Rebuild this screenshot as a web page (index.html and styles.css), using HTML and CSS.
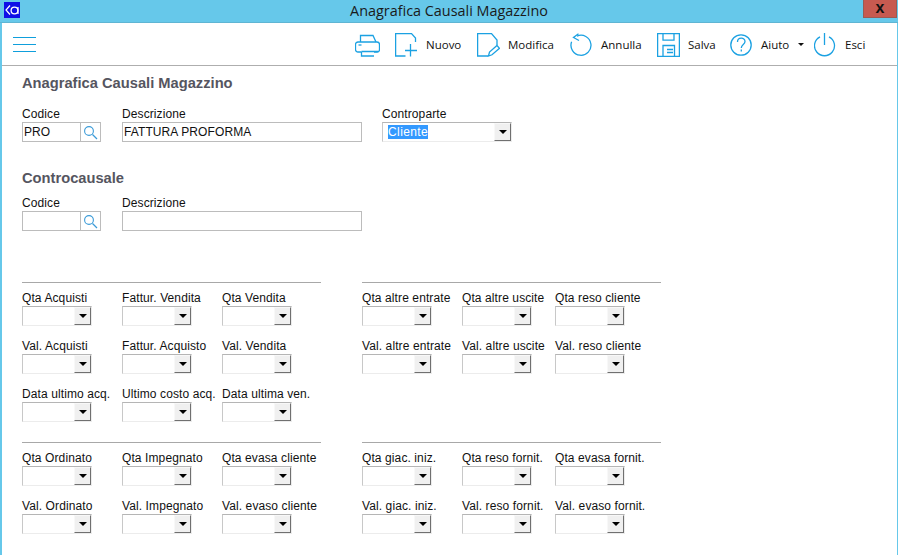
FILE: index.html
```html
<!DOCTYPE html>
<html lang="it">
<head>
<meta charset="utf-8">
<title>Anagrafica Causali Magazzino</title>
<link rel="stylesheet" href="styles.css">
</head>
<body>
<header class="titlebar">
  <span class="app-logo"><svg width="16" height="16" viewBox="0 0 16 16"><path d="M6 3.5 2 8l4 4.5" fill="none" stroke="#fff" stroke-width="1.2"/><circle cx="10.5" cy="8.5" r="3.4" fill="none" stroke="#fff" stroke-width="1.3"/><path d="M14 5v7" stroke="#fff" stroke-width="1.2"/></svg></span>
  <span class="window-title">Anagrafica Causali Magazzino</span>
  <span class="close-btn">x</span>
</header>
<div class="window">
<nav class="toolbar">
  <span class="hamburger"><i></i><i></i><i></i></span>
  <div class="actions">
    <span class="tool tool-print"><svg width="25" height="24" viewBox="0 0 25 24"><g class="ic"><path d="M5.500 9V2.500H18L21 9"/><path d="M6 19H3a2.500 2.500 0 0 1-2.500-2.500v-5A2.500 2.500 0 0 1 3 9h19a2.500 2.500 0 0 1 2.500 2.500v5A2.500 2.500 0 0 1 22 19h-3"/><path d="M6.500 18.500H23M6.500 18.500V23H19"/><path d="M3.500 12h3"/></g></svg></span>
    <span class="tool tool-new"><svg width="22" height="24" viewBox="0 0 22 24"><g class="ic"><path d="M10.500 23H.6V.6H16.500L20.500 5V9"/><path d="M10 17.500H22M15.500 11V23.500"/></g></svg><span class="tool-label">Nuovo</span></span>
    <span class="tool tool-edit"><svg width="23" height="24" viewBox="0 0 23 24"><g class="ic"><path d="M11 23H.6V.6H14.500L20 7V12"/><path d="M11.500 23l1-4 7.500-6.500 2.500 2.800-7.500 6.500z"/></g></svg><span class="tool-label">Modifica</span></span>
    <span class="tool tool-undo"><svg width="23" height="24" viewBox="0 0 23 24"><g class="ic"><path d="M7 3.100A10 10 0 1 1 1.600 8.800"/><path d="M8.500.8 3.500 4.500 9 7.500"/></g></svg><span class="tool-label">Annulla</span></span>
    <span class="tool tool-save"><svg width="23" height="24" viewBox="0 0 23 24"><g class="ic"><path d="M.6.600h21.800v22.800H.6z"/><path d="M6 .600v6.600h11V.6"/><path d="M6 23.400V12.500h11.500v10.900"/><path d="M10 16.500h6M10 19.500h6"/></g></svg><span class="tool-label">Salva</span></span>
    <span class="tool tool-help"><svg width="22" height="22" viewBox="0 0 22 22"><g class="ic"><circle cx="11" cy="11" r="10.200"/><path d="M7.500 8c0-5 7.500-5 7.500-.5 0 3-3.700 3-3.700 6.500"/><path d="M11.300 15.500v2"/></g></svg><span class="tool-label">Aiuto</span><span class="caret"></span></span>
    <span class="tool tool-exit"><svg width="22" height="24" viewBox="0 0 22 24"><g class="ic"><path d="M6 3.800a10 10 0 1 0 9 0"/><path d="M10.500 0v12"/></g></svg><span class="tool-label">Esci</span></span>
  </div>
</nav>
<main class="content">
  <h2 class="heading">Anagrafica Causali Magazzino</h2>
  <div class="form-row row-main">
    <div class="field w100"><label>Codice</label><div class="lookup"><span class="lookup-value">PRO</span><span class="lookup-btn"><svg width="15" height="15" viewBox="0 0 15 15"><circle cx="6" cy="6" r="4.400" fill="none" stroke="#3b9bd8" stroke-width="1.100"/><path d="M9.500 9.500l4.500 4.500" stroke="#3b9bd8" stroke-width="1.300"/></svg></span></div></div>
    <div class="field w260"><label>Descrizione</label><div class="text-input">FATTURA PROFORMA</div></div>
    <div class="field"><label>Controparte</label><div class="combo combo-wide"><span class="combo-value"><span class="selected">Cliente</span></span><span class="arrow"></span></div></div>
  </div>
  <h2 class="heading heading-2">Controcausale</h2>
  <div class="form-row row-sub">
    <div class="field w100"><label>Codice</label><div class="lookup"><span class="lookup-value"></span><span class="lookup-btn"><svg width="15" height="15" viewBox="0 0 15 15"><circle cx="6" cy="6" r="4.400" fill="none" stroke="#3b9bd8" stroke-width="1.100"/><path d="M9.500 9.500l4.500 4.500" stroke="#3b9bd8" stroke-width="1.300"/></svg></span></div></div>
    <div class="field w260"><label>Descrizione</label><div class="text-input"></div></div>
  </div>

  <section class="panels panels-1">
    <div class="panel">
      <div class="field"><label>Qta Acquisti</label><div class="combo"><span class="arrow"></span></div></div>
      <div class="field"><label>Fattur. Vendita</label><div class="combo"><span class="arrow"></span></div></div>
      <div class="field"><label>Qta Vendita</label><div class="combo"><span class="arrow"></span></div></div>
      <div class="field"><label>Val. Acquisti</label><div class="combo"><span class="arrow"></span></div></div>
      <div class="field"><label>Fattur. Acquisto</label><div class="combo"><span class="arrow"></span></div></div>
      <div class="field"><label>Val. Vendita</label><div class="combo"><span class="arrow"></span></div></div>
      <div class="field"><label>Data ultimo acq.</label><div class="combo"><span class="arrow"></span></div></div>
      <div class="field"><label>Ultimo costo acq.</label><div class="combo"><span class="arrow"></span></div></div>
      <div class="field"><label>Data ultima ven.</label><div class="combo"><span class="arrow"></span></div></div>
    </div>
    <div class="panel panel-right">
      <div class="field"><label>Qta altre entrate</label><div class="combo"><span class="arrow"></span></div></div>
      <div class="field"><label>Qta altre uscite</label><div class="combo"><span class="arrow"></span></div></div>
      <div class="field"><label>Qta reso cliente</label><div class="combo"><span class="arrow"></span></div></div>
      <div class="field"><label>Val. altre entrate</label><div class="combo"><span class="arrow"></span></div></div>
      <div class="field"><label>Val. altre uscite</label><div class="combo"><span class="arrow"></span></div></div>
      <div class="field"><label>Val. reso cliente</label><div class="combo"><span class="arrow"></span></div></div>
    </div>
  </section>

  <section class="panels panels-2">
    <div class="panel">
      <div class="field"><label>Qta Ordinato</label><div class="combo"><span class="arrow"></span></div></div>
      <div class="field"><label>Qta Impegnato</label><div class="combo"><span class="arrow"></span></div></div>
      <div class="field"><label>Qta evasa cliente</label><div class="combo"><span class="arrow"></span></div></div>
      <div class="field"><label>Val. Ordinato</label><div class="combo"><span class="arrow"></span></div></div>
      <div class="field"><label>Val. Impegnato</label><div class="combo"><span class="arrow"></span></div></div>
      <div class="field"><label>Val. evaso cliente</label><div class="combo"><span class="arrow"></span></div></div>
    </div>
    <div class="panel panel-right">
      <div class="field"><label>Qta giac. iniz.</label><div class="combo"><span class="arrow"></span></div></div>
      <div class="field"><label>Qta reso fornit.</label><div class="combo"><span class="arrow"></span></div></div>
      <div class="field"><label>Qta evasa fornit.</label><div class="combo"><span class="arrow"></span></div></div>
      <div class="field"><label>Val. giac. iniz.</label><div class="combo"><span class="arrow"></span></div></div>
      <div class="field"><label>Val. reso fornit.</label><div class="combo"><span class="arrow"></span></div></div>
      <div class="field"><label>Val. evaso fornit.</label><div class="combo"><span class="arrow"></span></div></div>
    </div>
  </section>
</main>
</div>
</body>
</html>
```

FILE: styles.css
```css
* { box-sizing: border-box; }
html, body { margin: 0; padding: 0; height: 100%; overflow: hidden; background: #fff; }
body {
  width: 898px; height: 555px;
  font-family: "Liberation Sans", Arial, sans-serif;
  font-size: 12px; color: #111; letter-spacing: .1px;
  display: flex; flex-direction: column;
}
.titlebar {
  height: 23px; flex: none;
  background: #66c8ea;
  border-bottom: 1px solid #5fb5d3;
  position: relative;
  display: flex; align-items: flex-start; justify-content: center;
  letter-spacing: 0;
}
.app-logo {
  position: absolute; left: 4px; top: 2px;
  width: 16px; height: 16px; background: #0f0fe6; display: block; line-height: 0;
}
.window-title {
  font-family: "Open Sans", "Noto Sans", sans-serif;
  font-size: 14.4px; line-height: 21px; color: #1a1a1a;
}
.close-btn {
  position: absolute; left: 863px; top: 0;
  width: 34px; height: 18px;
  background: #c75a50; border: 1px solid #9b5a53; border-top: 0;
  font: bold 16px/15px "Liberation Sans", sans-serif; text-align: center; color: #111;
}
.window {
  flex: 1; min-height: 0;
  border-left: 2px solid #66c8ea;
  border-right: 1px solid #66c8ea;
  display: flex; flex-direction: column;
}
.toolbar {
  height: 43px; flex: none;
  border-bottom: 1px solid #aeaeae;
  display: flex; align-items: center; justify-content: space-between;
  padding: 0 22px 0 11px;
  letter-spacing: 0;
}
.hamburger { display: flex; flex-direction: column; gap: 6px; width: 23px; }
.hamburger i { display: block; height: 1px; background: #0f9fdc; }
.actions { display: flex; align-items: center; }
.tool { display: flex; align-items: center; flex: none; }
.tool svg { display: block; flex: none; margin-top: 2px; }
.ic { fill: none; stroke: #1ba1e2; stroke-width: 1.3; }
.tool-label { font-family: "Open Sans", "Noto Sans", sans-serif; font-size: 11.5px; color: #111; }
.tool-print { width: 40px; }
.tool-new { width: 82px; }
.tool-new .tool-label { margin-left: 9px; }
.tool-edit { width: 93px; }
.tool-edit .tool-label { margin-left: 8px; }
.tool-undo { width: 87px; }
.tool-undo .tool-label { margin-left: 8px; }
.tool-save { width: 73px; }
.tool-save .tool-label { margin-left: 8px; }
.tool-help { width: 84px; }
.tool-help .tool-label { margin-left: 9px; }
.caret { width: 0; height: 0; margin-left: 9px; border: 3px solid transparent; border-top: 3px solid #111; border-bottom: 0; }
.tool-exit { width: 61px; }
.tool-exit .tool-label { margin-left: 9px; }
.content { padding: 0 0 0 20px; flex: 1; }
.heading {
  margin: 9px 0 0; font-size: 14.7px; line-height: 17px; font-weight: bold; color: #555560; letter-spacing: 0;
}
.heading-2 { margin-top: 28px; }
.form-row { display: flex; }
.row-main { margin-top: 15px; }
.row-sub { margin-top: 9px; }
label { display: block; line-height: 14px; height: 15px; white-space: nowrap; }
.w100 { width: 100px; }
.w260 { width: 260px; }
.lookup {
  width: 79px; height: 20px; border: 1px solid #bcbcbc; display: flex; background: #fff;
}
.lookup-value { flex: 1; padding-left: 1px; line-height: 18px; border-right: 1px solid #bcbcbc; }
.lookup-btn { width: 19px; display: flex; align-items: center; justify-content: center; }
.text-input {
  width: 240px; height: 20px; border: 1px solid #bcbcbc; padding-left: 1px; line-height: 18px;
}
.combo {
  width: 70px; height: 20px;
  border-top: 1px solid #b5b5b5; border-left: 1px solid #c8c8c8;
  border-bottom: 1px solid #ececec; border-right: 1px solid #ececec;
  display: flex; justify-content: flex-end; background: #fff;
}
.combo-wide { width: 130px; }
.combo-value { flex: 1; padding-left: 5px; line-height: 18px; }
.selected { background: #3399ff; color: #fff; display: inline-block; line-height: 14px; letter-spacing: .4px; }
.arrow {
  width: 17px; height: 18px;
  background: #f0f0f0;
  border-top: 1px solid #f8f8f8; border-left: 1px solid #f8f8f8;
  border-right: 1px solid #707070; border-bottom: 1px solid #707070;
  display: flex; align-items: center; justify-content: center;
}
.arrow::before {
  content: ""; width: 0; height: 0;
  border: 4px solid transparent; border-top: 4px solid #000; border-bottom: 0;
}
.panels { display: flex; }
.panels-1 { margin-top: 51px; }
.panels-2 { margin-top: 20px; }
.panel {
  width: 299px;
  border-top: 1px solid #a8a8a8;
  display: grid; grid-template-columns: 100px 100px 100px;
  align-content: start;
  row-gap: 13px; padding-top: 8px;
}
.panel-right {
  margin-left: 41px; grid-template-columns: 100px 93px 107px;
}
```
